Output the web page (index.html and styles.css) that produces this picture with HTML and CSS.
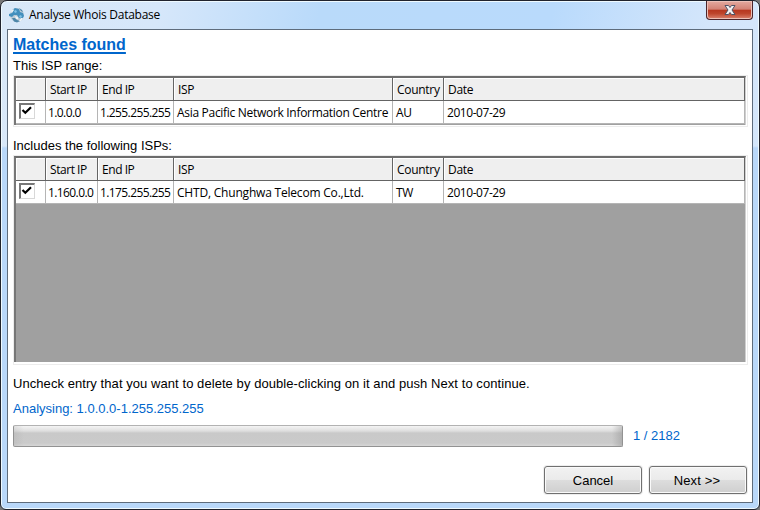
FILE: index.html
```
<!DOCTYPE html>
<html lang="en">
<head>
<meta charset="utf-8">
<title>Analyse Whois Database</title>
<link rel="stylesheet" href="styles.css">
</head>
<body>
<div class="window">
  <header class="titlebar">
    <svg class="globe" viewBox="0 0 16 16">
      <circle cx="8" cy="8" r="7" fill="#bccbd6"/>
      <path d="M6 1l4 1 1 3 3 1 1 3-2 3-3-1-2-3-3 0-2 2-3-1 0-2 3-1 0-3z" fill="#438fbd"/>
      <path d="M3 11l3 0 2 2 3 1-3 1.500-3-1zM10 1l3 2 1 2-2-1z" fill="#4d86a9"/>
      <path d="M6 3l2 1-1 2-2-1zM11 8l2 1-1 2-2-1z" fill="#83c3e7"/>
      <path d="M2 4l2-2 1 1-2 3zM6 9l3 1 0 2-2 0zM12 11l2 0-2 3-2 0z" fill="#eff4f6"/>
    </svg>
    <h1 class="title">Analyse Whois Database</h1>
    <button class="close" aria-label="Close">
      <svg viewBox="0 0 12 12"><path d="M1 1.500h3.500L6 3.500l1.500-2H11L8 6l3 4.500H7.500L6 8.500l-1.500 2H1L4 6z" fill="#f2f2f4" stroke="#4e5265" stroke-linejoin="round"/></svg>
    </button>
  </header>
  <main class="client">
    <h2 class="heading">Matches found</h2>
    <p class="label range">This ISP range:</p>
    <section class="frame">
      <div class="grid">
        <div class="row head"><div></div><div class="w-start">Start IP</div><div class="w-end">End IP</div><div>ISP</div><div class="w-country">Country</div><div>Date</div></div>
        <div class="row"><div class="tick"><span class="check"><svg viewBox="0 0 12 12"><path d="M1.500 5L4.300 7.800l5.700-5.600" fill="none" stroke="#000" stroke-width="2.200"/></svg></span></div><div class="ip">1.0.0.0</div><div class="ip">1.255.255.255</div><div class="isp">Asia Pacific Network Information Centre</div><div>AU</div><div class="date">2010-07-29</div></div>
      </div>
    </section>
    <p class="label includes">Includes the following ISPs:</p>
    <section class="frame tall">
      <div class="grid">
        <div class="row head"><div></div><div class="w-start">Start IP</div><div class="w-end">End IP</div><div>ISP</div><div class="w-country">Country</div><div>Date</div></div>
        <div class="row"><div class="tick"><span class="check"><svg viewBox="0 0 12 12"><path d="M1.500 5L4.300 7.800l5.700-5.600" fill="none" stroke="#000" stroke-width="2.200"/></svg></span></div><div class="ip">1.160.0.0</div><div class="ip">1.175.255.255</div><div class="chtd">CHTD, Chunghwa Telecom Co.,Ltd.</div><div>TW</div><div class="date">2010-07-29</div></div>
      </div>
    </section>
    <p class="label hint">Uncheck entry that you want to delete by double-clicking on it and push Next to continue.</p>
    <p class="label status">Analysing: 1.0.0.0-1.255.255.255</p>
    <div class="progress-row"><div class="progress"></div><span class="count">1 / 2182</span></div>
    <footer class="actions"><button class="btn">Cancel</button><button class="btn next">Next &gt;&gt;</button></footer>
  </main>
</div>
</body>
</html>
```
FILE: styles.css
```
* { box-sizing: border-box; }
body { margin: 0; background: #777; overflow: hidden; }
h1, h2, p { margin: 0; font-weight: normal; }
button { font: inherit; padding: 0; margin: 0; }
.window {
  width: 760px; height: 510px;
  padding: 0 6px 6px;
  border: 1px solid #20232d;
  border-radius: 7px 7px 6px 6px;
  box-shadow: inset 0 0 0 1px #effaff;
  background: linear-gradient(#0000 145px, #b9d8fa 147px), linear-gradient(105deg, #d9e8f8 0, #d6e7fa 18%, #b9dafa 36%, #b9dafc 62%, #d4e6fb 80%, #d5e7fb 100%);
}
.titlebar { height: 28px; display: flex; align-items: flex-start; padding: 0 0 0 2px; }
.globe { width: 16px; height: 16px; margin-top: 6px; }
.title { font: 12px/20px "Open Sans", "Noto Sans", sans-serif; letter-spacing: -0.25px; margin: 4px 0 0 4px; color: #000; white-space: nowrap; }
.close {
  width: 47px; height: 19px; margin-left: auto;
  display: flex; align-items: center; justify-content: center;
  border: 1px solid #4b252b; border-top: 0; border-radius: 0 0 4px 4px;
  box-shadow: inset 0 0 0 1px #ecc0b7;
  background: linear-gradient(#e4aaa0 0, #d38275 46%, #b7361f 50%, #bd452c 70%, #dc8370 100%);
}
.close svg { width: 12px; height: 12px; }
.client {
  width: 746px; height: 474px;
  border: 1px solid #5e6c7c;
  background: #fff;
  padding: 5px 4px 0 5px;
  display: flex; flex-direction: column;
}
.heading { font: bold 16px/19px "Liberation Sans", Arial, sans-serif; color: #0066cc; text-decoration: underline; text-decoration-thickness: 2px; text-underline-offset: 2px; text-decoration-skip-ink: none; }
.label, .count, .btn { font: 13px/16px "Liberation Sans", Arial, sans-serif; color: #000; white-space: nowrap; }
.range { margin-top: 4px; }
.frame { width: 735px; height: 52px; margin-top: 1px; border: 1px solid #ececec; background: #fff; }
.grid { width: 732px; height: 49px; border-top: 2px solid #6c6c6c; border-left: 2px solid #777; background: #a0a0a0; border-right: 1px solid #cfcfcf; }
.tall { height: 210px; }
.tall .grid { height: 206px; }
.row { display: grid; grid-template-columns: 30px 52px 76px 219px 51px 301px; grid-template-rows: 23px; height: 23px; width: 729px; background: #fff; font: 12px/24px "Open Sans", "Noto Sans", sans-serif; }
.row > div { border-right: 1px solid #b5b5b5; border-bottom: 1px solid #b5b5b5; padding-left: 3px; white-space: nowrap; color: #000; letter-spacing: -0.3px; }
.row.head > div { border-color: #646464; background: #efefef; box-shadow: inset 1px 1px #fff; padding-left: 4px; }
.row:not(.head) { line-height: 23px; }
.row > .w-start, .row > .w-end { letter-spacing: -0.45px; }
.row > .ip { letter-spacing: -0.6px; padding-left: 2px; }
.row > .chtd { letter-spacing: -0.2px; }
.row > .date { letter-spacing: -0.45px; }
.row > .tick { padding: 2px 0 0 3px; }
.check { display: block; width: 16px; height: 16px; border: 1px solid #777; border-width: 2px 1px 1px 2px; border-right-color: #d8d8d8; border-bottom-color: #d8d8d8; }
.check svg { display: block; width: 12px; height: 12px; }
.includes { margin-top: 11px; }
.hint { margin-top: 11px; letter-spacing: 0.065px; }
.status { margin-top: 9px; color: #0066cc; }
.progress-row { display: flex; margin-top: 8px; }
.progress { width: 610px; height: 22px; border: 1px solid #929292; border-top-color: #b2b2b2; border-radius: 2px; background: linear-gradient(90deg, #9993 0, #9990 10px calc(100% - 10px), #8886 100%), linear-gradient(#f4f4f4 0, #dedede 25%, #c9c9c9 35%, #cacaca 85%, #d6d6d6 100%); }
.count { color: #0066cc; margin: 3px 0 0 10px; }
.actions { display: flex; justify-content: flex-end; gap: 7px; margin: 19px 1px 0 0; }
.btn { width: 98px; height: 28px; padding-top: 1px; border: 1px solid #707070; border-radius: 3px; box-shadow: inset 0 0 0 1px #fafafa, 0 0 0 1px #eee; background: linear-gradient(#f2f2f2 0, #ebebeb 48%, #dddddd 50%, #cfcfcf 100%); }
.next { padding-right: 2px; letter-spacing: 0.15px; }
```
